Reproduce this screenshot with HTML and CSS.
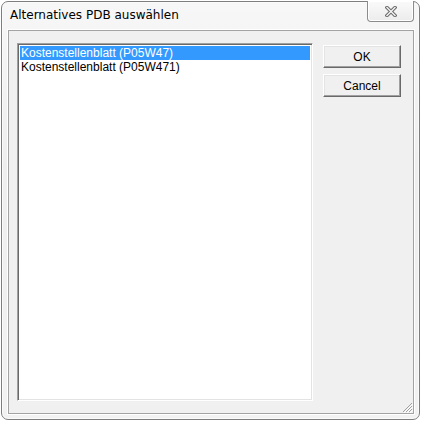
FILE: index.html
```html
<!DOCTYPE html>
<html lang="de">

<head>
    <meta charset="UTF-8">
    <title>Alternatives PDB auswählen</title>
    <link rel="stylesheet" href="styles.css">
</head>

<body>

    <div class="window">
        <div class="titlebar">
            <span class="title">Alternatives PDB auswählen</span>
            <div class="close">
                <svg width="12" height="11" viewBox="0 0 12 11">
                    <path d="M2 1.5 L10 9.5 M10 1.5 L2 9.5" stroke="#6a6a6a" stroke-width="3.4" stroke-linecap="square" fill="none"/>
                    <path d="M2 1.5 L10 9.5 M10 1.5 L2 9.5" stroke="#f4f4f4" stroke-width="1.4" stroke-linecap="square" fill="none"/>
                </svg>
            </div>
        </div>

        <div class="client">
            <div class="listbox">
                <div class="item selected">Kostenstellenblatt (P05W47)</div>
                <div class="item">Kostenstellenblatt (P05W471)</div>
            </div>

            <div class="buttons">
                <button class="btn">OK</button>
                <button class="btn">Cancel</button>
            </div>

            <svg class="grip" width="11" height="11" viewBox="0 0 11 11">
                <path d="M10 1 L1 10 M10 4 L4 10 M10 7 L7 10" stroke="#a0a0a0" stroke-width="1" fill="none"/>
                <path d="M11 2 L2 11 M11 5 L5 11 M11 8 L8 11" stroke="#ffffff" stroke-width="1" fill="none"/>
            </svg>
        </div>
    </div>

</body>

</html>
```

FILE: styles.css
```css
body {
    margin: 0;
    background: #ffffff;
    font-family: Tahoma, "DejaVu Sans", sans-serif;
}

.window {
    position: relative;
    box-sizing: border-box;
    width: 419px;
    height: 419px;
    margin: 1px;
    border: 1px solid #7e7e7e;
    border-radius: 7px;
    background: linear-gradient(#f7f7f7, #eeeeee 40%, #f2f2f2);
    box-shadow: inset 0 0 0 1px #fbfbfb;
    display: flex;
    flex-direction: column;
}

.titlebar {
    height: 28px;
    display: flex;
    align-items: center;
}

.title {
    margin-left: 8px;
    margin-top: -2px;
    font-family: "DejaVu Sans", sans-serif;
    font-size: 12px;
    color: #000;
}

.close {
    position: absolute;
    top: -1px;
    right: 5px;
    box-sizing: border-box;
    width: 47px;
    height: 21px;
    border: 1px solid #8c8c8c;
    border-top: none;
    border-radius: 0 0 4px 4px;
    background: linear-gradient(#fafafa, #ececec);
    box-shadow: inset 0 0 0 1px #ffffff;
    display: flex;
    justify-content: center;
    align-items: center;
    padding-top: 1px;
}

.client {
    position: relative;
    flex: 1;
    margin: 0 5px 5px 6px;
    border: 1px solid #a3a3a3;
    outline: 1px solid #ffffff;
    background: #f0f0f0;
    display: flex;
    gap: 10px;
    padding: 12px 12px 12px 8px;
}

.listbox {
    width: 296px;
    box-sizing: border-box;
    background: #ffffff;
    border-top: 1px solid #a0a0a0;
    border-left: 1px solid #a0a0a0;
    border-right: 1px solid #ffffff;
    border-bottom: 1px solid #ffffff;
    box-shadow: inset 1px 1px 0 #696969, inset -1px -1px 0 #e3e3e3;
    padding: 2px 2px;
}

.item {
    height: 14px;
    line-height: 14px;
    padding-left: 1px;
    font-family: "Liberation Sans", Arial, sans-serif;
    font-size: 12px;
    color: #000;
    white-space: nowrap;
}

.item.selected {
    background: #3399ff;
    color: #ffffff;
}

.buttons {
    display: flex;
    flex-direction: column;
    gap: 6px;
}

.btn {
    width: 78px;
    height: 23px;
    margin-top: 2px;
    padding: 0;
    font-family: "Liberation Sans", Arial, sans-serif;
    font-size: 12px;
    color: #000;
    background: #f0f0f0;
    border-top: 1px solid #ffffff;
    border-left: 1px solid #ffffff;
    border-right: 1px solid #696969;
    border-bottom: 1px solid #696969;
    box-shadow: inset -1px -1px 0 #a0a0a0, inset 1px 1px 0 #e3e3e3;
}

.btn + .btn {
    margin-top: 0;
}

.grip {
    position: absolute;
    right: 0;
    bottom: 0;
}
```
